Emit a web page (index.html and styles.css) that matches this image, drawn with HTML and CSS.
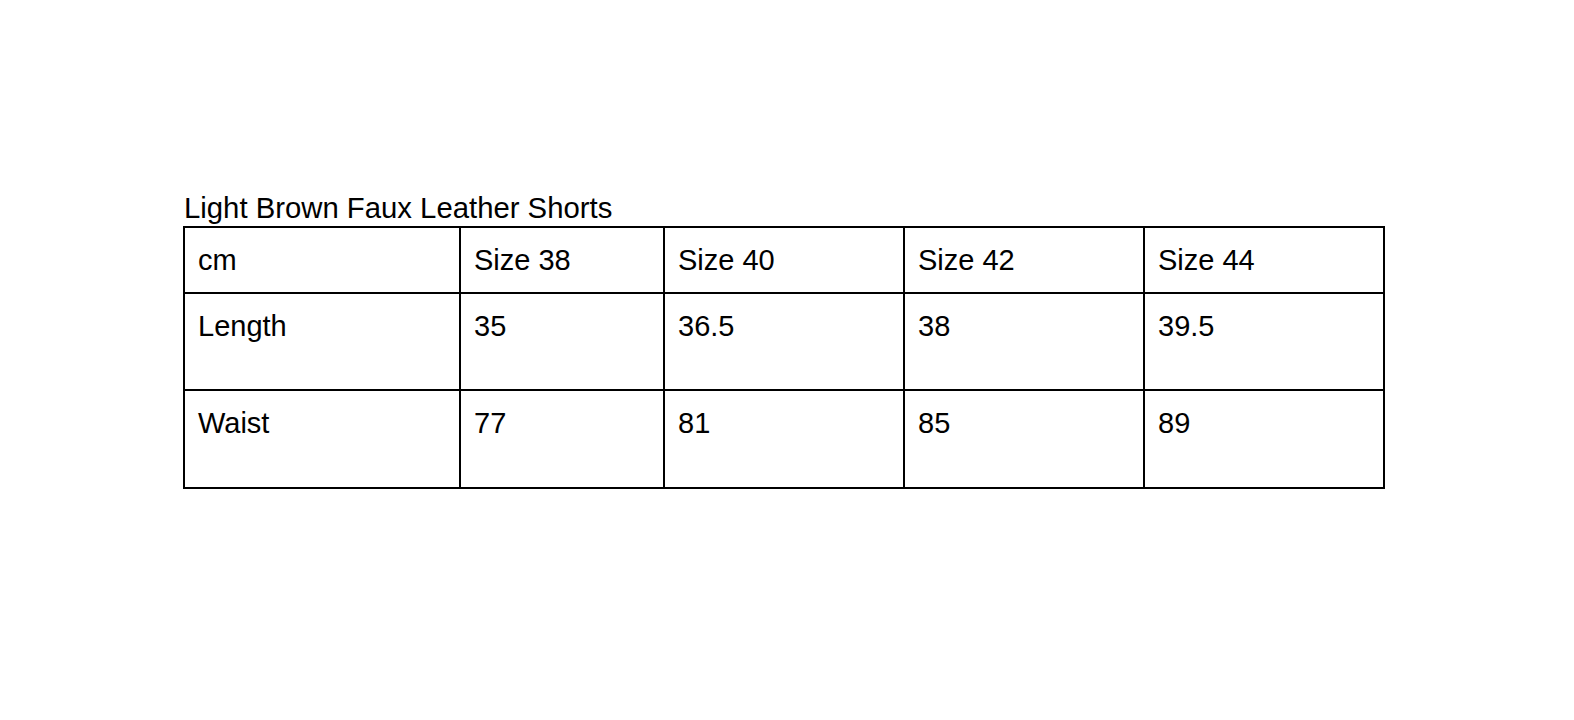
FILE: index.html
```html
<!DOCTYPE html>
<html>
<head>
<meta charset="utf-8">
<link rel="stylesheet" href="styles.css">
</head>
<body>
<div class="page">
  <div class="title">Light Brown Faux Leather Shorts</div>
  <table class="sizes">
    <colgroup>
      <col class="c1"><col class="c2"><col class="c3"><col class="c4"><col class="c5">
    </colgroup>
    <tr class="r-head"><td>cm</td><td>Size 38</td><td>Size 40</td><td>Size 42</td><td>Size 44</td></tr>
    <tr class="r-len"><td>Length</td><td>35</td><td>36.5</td><td>38</td><td>39.5</td></tr>
    <tr class="r-waist"><td>Waist</td><td>77</td><td>81</td><td>85</td><td>89</td></tr>
  </table>
</div>
</body>
</html>
```
FILE: styles.css
```css
html, body {
  margin: 0;
  background: #ffffff;
}
body {
  font-family: "Liberation Sans", Arial, sans-serif;
  color: #000000;
}
.page {
  padding: 191px 0 0 183px;
}
.title {
  font-size: 29.3px;
  line-height: 33px;
  margin-bottom: 2px;
  padding-left: 1px;
}
.sizes {
  border-collapse: collapse;
  table-layout: fixed;
  width: 1200px;
  font-size: 29px;
  line-height: 33px;
}
.sizes td {
  border: 2px solid #000;
  padding: 16px 13px 0 13px;
  vertical-align: top;
}
.c1 { width: 276px; }
.c2 { width: 204px; }
.c3 { width: 240px; }
.c4 { width: 240px; }
.c5 { width: 240px; }
.r-head td { height: 48px; }
.r-len td { height: 79px; }
.r-waist td { height: 80px; }
```
